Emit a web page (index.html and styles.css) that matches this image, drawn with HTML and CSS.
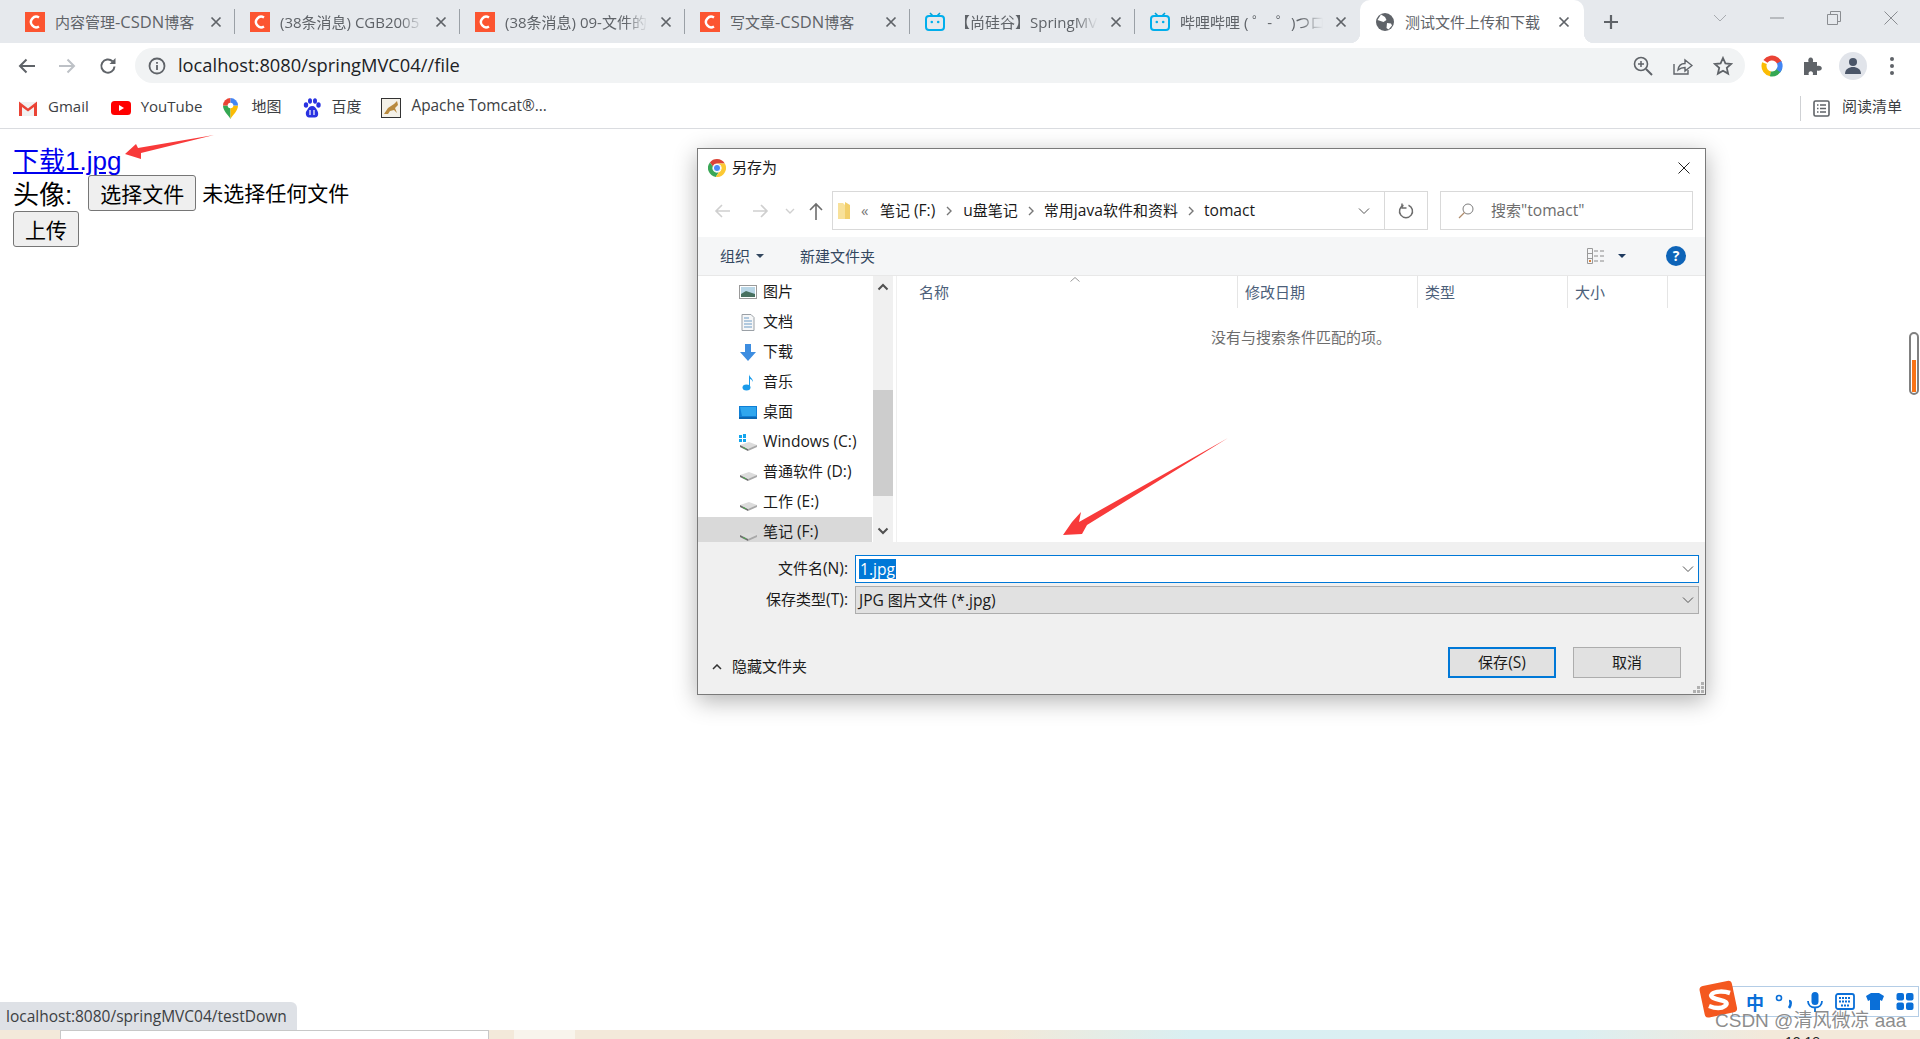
FILE: index.html
```html
<!DOCTYPE html>
<html lang="zh-CN">
<head>
  <meta charset="UTF-8" />
  <title>测试文件上传和下载</title>
  <link rel="stylesheet" href="styles.css">
</head>
<body>

<svg class="defs" width="0" height="0">
  <symbol id="x" viewBox="0 0 12 12"><path d="M1.5 1.5l9 9M10.5 1.5l-9 9" fill="none" stroke="#5f6368" stroke-width="1.7"/></symbol>
  <symbol id="csdn" viewBox="0 0 20 20"><rect width="20" height="20" fill="#fc5531"/><path d="M14 5.6A5.2 5.2 0 1 0 14 14.4" fill="none" stroke="#fff" stroke-width="2.4"/></symbol>
  <symbol id="bili" viewBox="0 0 20 20"><path d="M5 1l3 3M15 1l-3 3" stroke="#00a1d6" stroke-width="1.6" fill="none"/><rect x="1" y="4" width="18" height="14" rx="3" fill="#e6e9ed" stroke="#00aeec" stroke-width="2"/><circle cx="6.8" cy="10" r="1.3" fill="#00aeec"/><circle cx="13.2" cy="10" r="1.3" fill="#00aeec"/></symbol>
  <symbol id="drive" viewBox="0 0 19 12"><path d="M1 6l9-3 8 3-8 4z" fill="#dcdcdc"/><path d="M1 6l8 4v2L1 8z" fill="#6f6f6f"/><path d="M9 10l9-4v2l-9 4z" fill="#a8a8a8"/><path d="M4 8.4l3 1.4" stroke="#4caf50" stroke-width="1"/></symbol>
  <symbol id="chev" viewBox="0 0 12 8"><path d="M1 1.5l5 5 5-5" fill="none" stroke="#555" stroke-width="1"/></symbol>
  <symbol id="crumb" viewBox="0 0 6 10"><path d="M1 1l4 4-4 4" fill="none" stroke="#777" stroke-width="1.4"/></symbol>
</svg>

<div class="tabstrip">
  <div class="tab">
    <svg class="fav" width="20" height="20"><use href="#csdn"/></svg>
    <span class="tab-title">内容管理<span class="lat">-CSDN</span>博客</span>
    <svg class="tab-x" width="12" height="12"><use href="#x"/></svg>
  </div>
  <div class="tab">
    <svg class="fav" width="20" height="20"><use href="#csdn"/></svg>
    <span class="tab-title fade">(38条消息) CGB2005</span>
    <svg class="tab-x" width="12" height="12"><use href="#x"/></svg>
  </div>
  <div class="tab">
    <svg class="fav" width="20" height="20"><use href="#csdn"/></svg>
    <span class="tab-title fade">(38条消息) 09-文件的</span>
    <svg class="tab-x" width="12" height="12"><use href="#x"/></svg>
  </div>
  <div class="tab">
    <svg class="fav" width="20" height="20"><use href="#csdn"/></svg>
    <span class="tab-title">写文章<span class="lat">-CSDN</span>博客</span>
    <svg class="tab-x" width="12" height="12"><use href="#x"/></svg>
  </div>
  <div class="tab">
    <svg class="fav" width="20" height="20"><use href="#bili"/></svg>
    <span class="tab-title fade">【尚硅谷】SpringMV</span>
    <svg class="tab-x" width="12" height="12"><use href="#x"/></svg>
  </div>
  <div class="tab last">
    <svg class="fav" width="20" height="20"><use href="#bili"/></svg>
    <span class="tab-title fade">哔哩哔哩 ( ゜- ゜)つロ</span>
    <svg class="tab-x" width="12" height="12"><use href="#x"/></svg>
  </div>
  <div class="tab active">
    <svg class="fav" width="20" height="20" viewBox="0 0 20 20">
      <circle cx="10" cy="10" r="9" fill="#5f6368"/>
      <path d="M6 2.5l4 2.5 1.500 3-3 2-3-1-3-1zM12 11l4 .5 1 2-3.500 4-2-1.500z" fill="#fff"/>
    </svg>
    <span class="tab-title">测试文件上传和下载</span>
    <svg class="tab-x" width="12" height="12"><use href="#x"/></svg>
  </div>
  <svg class="newtab" width="16" height="16" viewBox="0 0 16 16"><path d="M8 1v14M1 8h14" stroke="#5f6368" stroke-width="2.200"/></svg>
  <div class="win-btns">
    <svg width="14" height="8" viewBox="0 0 14 8"><path d="M1 1l6 6 6-6" fill="none" stroke="#a8abb0" stroke-width="1"/></svg>
    <svg class="win-min" width="14" height="2" viewBox="0 0 14 2"><path d="M0 1h14" stroke="#8a8d91" stroke-width="1"/></svg>
    <svg class="win-max" width="14" height="14" viewBox="0 0 14 14"><path d="M.5 3.500h10v10H.5zM3.500 3.500V.5h10v10h-3" fill="none" stroke="#8a8d91" stroke-width="1"/></svg>
    <svg class="win-close" width="14" height="14" viewBox="0 0 14 14"><path d="M.5.5l13 13M13.500.5l-13 13" stroke="#8a8d91" stroke-width="1"/></svg>
  </div>
</div>

<div class="toolbar">
  <svg class="nav-back" width="18" height="16" viewBox="0 0 18 16"><path d="M17 8H2M8.500 1.500L2 8l6.500 6.500" fill="none" stroke="#5f6368" stroke-width="2"/></svg>
  <svg class="nav-fwd" width="18" height="16" viewBox="0 0 18 16"><path d="M1 8h15M9.500 1.500L16 8l-6.500 6.500" fill="none" stroke="#bdc1c6" stroke-width="2"/></svg>
  <svg class="nav-reload" width="18" height="18" viewBox="0 0 18 18"><path d="M15.500 9.500a6.600 6.600 0 1 1-2-5.200" fill="none" stroke="#5f6368" stroke-width="2"/><path d="M16.500 1v6h-6z" fill="#5f6368"/></svg>
  <div class="omnibox">
    <svg width="18" height="18" viewBox="0 0 18 18"><circle cx="9" cy="9" r="7.500" fill="none" stroke="#5f6368" stroke-width="1.800"/><path d="M9 8v5M9 5v1.800" stroke="#5f6368" stroke-width="1.800"/></svg>
    <span class="url">localhost:8080/springMVC04//file</span>
    <div class="omni-icons">
      <svg width="20" height="20" viewBox="0 0 20 20"><circle cx="8" cy="8" r="6.500" fill="none" stroke="#5f6368" stroke-width="1.600"/><path d="M13 13l6 6" stroke="#5f6368" stroke-width="2"/><path d="M8 5v6M5 8h6" stroke="#5f6368" stroke-width="1.500"/></svg>
      <svg width="20" height="20" viewBox="0 0 20 20"><path d="M1 8v10h14v-4" fill="none" stroke="#5f6368" stroke-width="1.400"/><path d="M5 14c.5-4 3-6.500 7-6.500V4l7 5.500-7 5.500v-3.500c-3 0-5 .8-7 2.500z" fill="none" stroke="#5f6368" stroke-width="1.400"/></svg>
      <svg width="20" height="20" viewBox="0 0 20 20"><path d="M10 2l2.400 5.400 5.800.6-4.400 3.900 1.300 5.700L10 14.700l-5.100 2.900 1.300-5.700L1.800 8l5.800-.6z" fill="none" stroke="#5f6368" stroke-width="1.800"/></svg>
    </div>
  </div>
  <div class="ext-icons">
    <svg width="22" height="22" viewBox="0 0 22 22">
      <g fill="none" stroke-width="5">
        <circle cx="11" cy="11" r="8" stroke="#ea4335" pathLength="100" stroke-dasharray="34 100" transform="rotate(-145 11 11)"/>
        <circle cx="11" cy="11" r="8" stroke="#fbbc04" pathLength="100" stroke-dasharray="28 100" transform="rotate(100 11 11)"/>
        <circle cx="11" cy="11" r="8" stroke="#34a853" pathLength="100" stroke-dasharray="24 100" transform="rotate(15 11 11)"/>
        <circle cx="11" cy="11" r="8" stroke="#4285f4" pathLength="100" stroke-dasharray="18 100" transform="rotate(-28 11 11)"/>
      </g>
    </svg>
    <svg width="20" height="20" viewBox="0 0 20 20"><path d="M1 6h4.500c-.8-3 .5-4.500 2.200-4.500S10.700 3 9.900 6H14v4c3-.8 4.800.5 4.800 2.200S17 15.200 14 14.400V19H9.800c.8-2.600-.5-3.800-2-3.800s-2.800 1.200-2 3.800H1z" fill="#5f6368"/></svg>
    <div class="avatar"><svg width="18" height="18" viewBox="0 0 18 18"><circle cx="9" cy="5" r="4" fill="#4a5568"/><path d="M1 17c0-5 4-7 8-7s8 2 8 7z" fill="#4a5568"/></svg></div>
    <svg width="4" height="18" viewBox="0 0 4 18"><circle cx="2" cy="2" r="2" fill="#5f6368"/><circle cx="2" cy="9" r="2" fill="#5f6368"/><circle cx="2" cy="16" r="2" fill="#5f6368"/></svg>
  </div>
</div>

<div class="bookmarks">
  <div class="bm bm-gmail">
    <svg width="20" height="16" viewBox="0 0 20 16"><path d="M1 2h18v14H1z" fill="#f1f1f1"/><path d="M1 16V1.500L10 8.500l9-7V16h-3V7l-6 4.500L4 7v9z" fill="#ea4335"/></svg>
    <span>Gmail</span>
  </div>
  <div class="bm bm-yt">
    <svg width="20" height="14" viewBox="0 0 20 14"><rect width="20" height="14" rx="3.500" fill="#f00"/><path d="M8 4l5 3-5 3z" fill="#fff"/></svg>
    <span>YouTube</span>
  </div>
  <div class="bm bm-map">
    <svg width="15" height="21" viewBox="0 0 15 21">
      <path d="M7.500 21C5 16.500 0 13 0 7.500h7.500z" fill="#34a853"/><path d="M7.500 21C10 16.500 15 13 15 7.500H7.500z" fill="#fbbc04"/>
      <path d="M0 7.500A7.500 7.500 0 0 1 7.500 0v7.500z" fill="#ea4335"/><path d="M7.500 0A7.500 7.500 0 0 1 15 7.500H7.500z" fill="#4285f4"/>
      <circle cx="7.500" cy="7.500" r="2.800" fill="#fff"/>
    </svg>
    <span>地图</span>
  </div>
  <div class="bm bm-baidu">
    <svg width="18" height="20" viewBox="0 0 18 20" fill="#2932e1"><ellipse cx="3" cy="7" rx="2.200" ry="2.800"/><ellipse cx="7" cy="3" rx="2" ry="2.800"/><ellipse cx="12" cy="3" rx="2" ry="2.800"/><ellipse cx="15.500" cy="7" rx="2.200" ry="2.800"/><path d="M9 8c-3 0-4 3-5.500 5S3 19.500 6 19.500h6c3 0 4-3.500 2.500-6.500S12 8 9 8z"/><path d="M7 12v5M11 12v5" stroke="#fff" stroke-width="1.200"/></svg>
    <span>百度</span>
  </div>
  <div class="bm bm-tomcat">
    <svg width="20" height="20" viewBox="0 0 20 20"><rect x=".5" y=".5" width="19" height="19" fill="#f4f1e8" stroke="#333"/><path d="M3 16l4-6 6-4 3-3 1 4-3 3 2 5-3-3-4 1-2 3z" fill="#b98a3e"/></svg>
    <span>Apache Tomcat®...</span>
  </div>
  <div class="reading">
    <svg width="17" height="17" viewBox="0 0 17 17"><rect x="1" y="1" width="15" height="15" rx="1.500" fill="none" stroke="#5f6368" stroke-width="1.600"/><path d="M4 5h1.500M7 5h6M4 8.500h1.500M7 8.500h6M4 12h1.500M7 12h6" stroke="#5f6368" stroke-width="1.300"/></svg>
    <span>阅读清单</span>
  </div>
</div>

<div class="page">
  <div class="line"><a class="down-link" href="#">下载1.jpg</a></div>
  <form>
    <div class="line"><span class="lbl">头像:</span><button type="button" class="pg-btn pick">选择文件</button><span class="no-file">未选择任何文件</span></div>
    <div class="line"><button type="button" class="pg-btn">上传</button></div>
  </form>

  <svg class="arrow arrow-link" width="100" height="30" viewBox="0 0 100 30"><path d="M1 19L12 9 14 13 90 0 17 18 17 24z" fill="#f83a3a"/></svg>

  <div class="dialog">
    <div class="dlg-title">
      <svg width="18" height="18" viewBox="0 0 18 18">
        <path d="M9 0a9 9 0 0 1 7.800 4.500H9A4.500 4.500 0 0 0 4.800 7.400L1.900 3.400A9 9 0 0 1 9 0z" fill="#db4437"/>
        <path d="M1.900 3.400A9 9 0 0 0 7.800 17.900l2.900-4.600A4.500 4.500 0 0 1 4.800 7.400z" fill="#3aa757"/>
        <path d="M16.800 4.500A9 9 0 0 1 7.800 17.900l3-4.600A4.500 4.500 0 0 0 12 5.700L9 4.500z" fill="#fcc934"/>
        <circle cx="9" cy="9" r="3.600" fill="#4c8bf5" stroke="#fff" stroke-width="1"/>
      </svg>
      <span>另存为</span>
      <svg class="dlg-close" width="12" height="12" viewBox="0 0 12 12"><path d="M.5.5l11 11M11.500.5l-11 11" stroke="#222" stroke-width="1"/></svg>
    </div>

    <div class="dlg-nav">
      <svg class="dlg-arrows" width="134" height="39" viewBox="0 0 134 39">
        <path d="M32 20H18M24 14l-6 6 6 6" fill="none" stroke="#cfcfcf" stroke-width="1.600"/>
        <path d="M55 20h14M63 14l6 6-6 6" fill="none" stroke="#cfcfcf" stroke-width="1.600"/>
        <path d="M88 18l4 4 4-4" fill="none" stroke="#d0d0d0" stroke-width="1.400"/>
        <path d="M118 29V13M112 19l6-6 6 6" fill="none" stroke="#6d6d6d" stroke-width="1.600"/>
      </svg>
      <div class="dlg-addr">
        <svg class="folder" width="13" height="17" viewBox="0 0 13 17"><path d="M0 1h5l2 2h5v14H0z" fill="#f8e19a"/><path d="M7 0l5 3v14H7z" fill="#f2cf6b"/></svg>
        <span class="dbl">«</span>
        <span>笔记 <span class="lat">(F:)</span></span>
        <svg class="crumb-sep" width="6" height="10"><use href="#crumb"/></svg>
        <span><span class="lat">u</span>盘笔记</span>
        <svg class="crumb-sep tight" width="6" height="10"><use href="#crumb"/></svg>
        <span>常用<span class="lat">java</span>软件和资料</span>
        <svg class="crumb-sep tight" width="6" height="10"><use href="#crumb"/></svg>
        <span class="lat">tomact</span>
        <svg class="addr-chev" width="12" height="8"><use href="#chev"/></svg>
        <div class="addr-refresh">
          <svg width="16" height="16" viewBox="0 0 16 16"><path d="M10.500 2.200a6.500 6.500 0 1 1-5 0" fill="none" stroke="#6d6d6d" stroke-width="1.500"/><path d="M4 .5v4.500h4.500" fill="none" stroke="#6d6d6d" stroke-width="1.500"/></svg>
        </div>
      </div>
      <div class="dlg-search">
        <svg width="16" height="16" viewBox="0 0 16 16"><circle cx="10" cy="6" r="5" fill="none" stroke="#7d7d7d" stroke-width="1"/><path d="M6.500 9.500L1 15" stroke="#b08c6c" stroke-width="1.200"/></svg>
        <span>搜索<span class="lat">"tomact"</span></span>
      </div>
    </div>

    <div class="dlg-tools">
      <span>组织</span>
      <svg class="caret" width="8" height="4" viewBox="0 0 8 4"><path d="M0 0h8L4 4z" fill="#33475f"/></svg>
      <span class="new-folder">新建文件夹</span>
      <svg class="view-ico" width="18" height="16" viewBox="0 0 18 16"><path d="M.5.500h5v15h-5zM.5 5.500h5M.5 10.500h5" fill="none" stroke="#9a9a9a"/><path d="M7 3h4M13 3h4M7 8h4M13 8h4M7 13h4M13 13h4" stroke="#8a8a8a"/><rect x="2" y="12" width="2" height="2" fill="#d9803c"/></svg>
      <svg class="caret view-caret" width="8" height="4" viewBox="0 0 8 4"><path d="M0 0h8L4 4z" fill="#1e3a5f"/></svg>
      <span class="help">?</span>
    </div>

    <div class="dlg-panes">
      <div class="tree">
        <div class="tree-row">
          <svg width="18" height="14" viewBox="0 0 18 14"><rect x=".5" y=".5" width="17" height="13" fill="#fff" stroke="#9a9a9a"/><rect x="2" y="2" width="14" height="10" fill="#b9d6e6"/><path d="M2 9l5-3 9 3v3H2z" fill="#47705f"/></svg>
          <span>图片</span>
        </div>
        <div class="tree-row">
          <svg width="18" height="17" viewBox="0 0 18 17"><path d="M3 .5h9l3 3v13H3z" fill="#f6f7f8" stroke="#9aa0a6"/><path d="M5 4h5M5 7h8M5 10h8M5 13h8" stroke="#6d9bc4"/></svg>
          <span>文档</span>
        </div>
        <div class="tree-row">
          <svg width="18" height="17" viewBox="0 0 18 17"><path d="M6 0h6v8h5l-8 9-8-9h5z" fill="#3d8de0"/></svg>
          <span>下载</span>
        </div>
        <div class="tree-row">
          <svg width="18" height="17" viewBox="0 0 18 17"><ellipse cx="7.500" cy="13.500" rx="4" ry="3" fill="#1a9bea"/><path d="M10 13V0c0 3 4 4 4 8-1-2-2-3-3-3v8z" fill="#1a9bea"/></svg>
          <span>音乐</span>
        </div>
        <div class="tree-row">
          <svg width="18" height="13" viewBox="0 0 18 13"><rect width="18" height="13" fill="#0f7fd6"/><path d="M1 1h16v9H3z" fill="#2fa6ee"/><path d="M0 12h18" stroke="#0a4f8c"/></svg>
          <span>桌面</span>
        </div>
        <div class="tree-row">
          <svg width="19" height="17" viewBox="0 0 19 17"><use href="#drive" y="5" width="19" height="12"/><path d="M0 1h3v3H0zM4 0h3v4H4zM0 5h3v3H0zM4 5h3v3H4z" fill="#12a5ee"/></svg>
          <span class="lat">Windows (C:)</span>
        </div>
        <div class="tree-row">
          <svg class="drv" width="19" height="12"><use href="#drive"/></svg>
          <span>普通软件 <span class="lat">(D:)</span></span>
        </div>
        <div class="tree-row">
          <svg class="drv" width="19" height="12"><use href="#drive"/></svg>
          <span>工作 <span class="lat">(E:)</span></span>
        </div>
        <div class="tree-row selected">
          <svg class="drv" width="19" height="12"><use href="#drive"/></svg>
          <span>笔记 <span class="lat">(F:)</span></span>
        </div>
      </div>

      <div class="tree-scroll">
        <svg width="12" height="8" viewBox="0 0 12 8"><path d="M1.500 6.500L6 2l4.500 4.500" fill="none" stroke="#505050" stroke-width="2"/></svg>
        <div class="tree-track"><div class="tree-thumb"></div></div>
        <svg width="12" height="8" viewBox="0 0 12 8"><path d="M1.500 1.500L6 6l4.500-4.500" fill="none" stroke="#505050" stroke-width="2"/></svg>
      </div>

      <div class="files">
        <div class="file-head">
          <div class="col col-name">名称<svg class="sort" width="10" height="5" viewBox="0 0 10 5"><path d="M.5 4.500L5 .5l4.500 4" fill="none" stroke="#9a9a9a"/></svg></div>
          <div class="col col-date">修改日期</div>
          <div class="col col-type">类型</div>
          <div class="col col-size">大小</div>
        </div>
        <div class="no-match">没有与搜索条件匹配的项。</div>
      </div>
    </div>

    <div class="dlg-bottom">
      <div class="field">
        <label>文件名<span class="lat">(N):</span></label>
        <div class="combo combo-name">
          <span class="sel-text lat">1.jpg</span>
          <svg width="12" height="8"><use href="#chev"/></svg>
        </div>
      </div>
      <div class="field field-type">
        <label>保存类型<span class="lat">(T):</span></label>
        <div class="combo combo-type">
          <span><span class="lat">JPG</span> 图片文件 <span class="lat">(*.jpg)</span></span>
          <svg width="12" height="8"><use href="#chev"/></svg>
        </div>
      </div>
      <div class="dlg-foot">
        <svg width="10" height="6" viewBox="0 0 10 6"><path d="M1 5l4-4 4 4" fill="none" stroke="#333" stroke-width="1.500"/></svg>
        <span class="hide-folders">隐藏文件夹</span>
        <button type="button" class="dlg-btn primary">保存<span class="lat">(S)</span></button>
        <button type="button" class="dlg-btn">取消</button>
      </div>
    </div>

    <svg class="grip" width="11" height="11" viewBox="0 0 11 11" fill="#b0b0b0"><rect x="8" y="0" width="3" height="3"/><rect x="4" y="4" width="3" height="3"/><rect x="8" y="4" width="3" height="3"/><rect x="0" y="8" width="3" height="3"/><rect x="4" y="8" width="3" height="3"/><rect x="8" y="8" width="3" height="3"/></svg>
    <svg class="arrow arrow-dlg" width="166" height="100" viewBox="0 0 166 100"><path d="M165 0L24 87 19 96 0 97 9 84 18 74 16 84z" fill="#f83a3a"/></svg>
  </div>

  <div class="scroll-pill"><div class="scroll-fill"></div></div>

  <div class="status">localhost:8080/springMVC04/testDown</div>

  <div class="ime">
    <svg class="ime-logo" width="42" height="40" viewBox="0 0 42 40">
      <rect x="3" y="3" width="33" height="32" rx="4" fill="#f4581f" transform="rotate(-12 20 20)"/>
      <path d="M31 13c-6-2-15-2-18 1s3 5 8 6 9 3 5 6-11 2-16 0" fill="none" stroke="#fff" stroke-width="4.500"/>
    </svg>
    <span class="ime-zh">中</span>
    <svg width="20" height="18" viewBox="0 0 20 18"><circle cx="4" cy="5" r="2.500" fill="none" stroke="#0a6fd8" stroke-width="1.600"/><path d="M14 8c2 0 2.500 3 0 7" fill="none" stroke="#0a6fd8" stroke-width="2.600"/></svg>
    <svg width="16" height="20" viewBox="0 0 16 20"><rect x="4.500" y="0" width="7" height="13" rx="3.500" fill="#0a6fd8"/><path d="M1 9c0 4 3 6.500 7 6.500S15 13 15 9M8 16v4" fill="none" stroke="#0a6fd8" stroke-width="1.800"/></svg>
    <svg width="20" height="17" viewBox="0 0 20 17"><rect x="1" y="1" width="18" height="15" rx="2" fill="none" stroke="#0a6fd8" stroke-width="1.800"/><path d="M4 5h12M4 8.500h12M6 12.500h8" stroke="#0a6fd8" stroke-width="2" stroke-dasharray="2 1"/></svg>
    <svg width="18" height="17" viewBox="0 0 18 17"><path d="M5 0h8l5 3-2 5-2-1v10H4V7L2 8 0 3z" fill="#0a6fd8"/></svg>
    <svg width="17" height="17" viewBox="0 0 17 17" fill="#0a6fd8"><rect width="7.500" height="7.500" rx="2"/><rect x="9.500" width="7.500" height="7.500" rx="2"/><rect y="9.500" width="7.500" height="7.500" rx="2"/><rect x="9.500" y="9.500" width="7.500" height="7.500" rx="2"/></svg>
  </div>
  <div class="watermark">CSDN @清风微凉 aaa</div>
</div>

<div class="taskstrip">
  <div class="task-window"></div>
  <div class="task-patch"></div>
  <div class="task-clock">13:18</div>
</div>

</body>
</html>
```

FILE: styles.css
```css
* {
  box-sizing: border-box;
}

html, body {
  margin: 0;
  height: 1039px;
  overflow: hidden;
}

body {
  display: flex;
  flex-direction: column;
  background: #fff;
  font-family: "Open Sans", "Noto Sans CJK SC", sans-serif;
}

.defs {
  position: absolute;
}

/* tab strip */
.tabstrip {
  height: 43px;
  flex: none;
  display: flex;
  padding-left: 10px;
  background: #e6e9ed;
}

.tab {
  width: 225px;
  height: 43px;
  display: flex;
  align-items: center;
  padding: 0 13px 0 15px;
  position: relative;
  font-size: 15px;
  color: #5f6368;
}

.tab .lat {
  font-size: 16.500px;
}

.tab::after {
  content: "";
  position: absolute;
  right: 0;
  top: 9px;
  height: 25px;
  width: 1px;
  background: #9aa0a6;
}

.tab.last::after {
  display: none;
}

.tab.active {
  width: 224px;
  padding-right: 14px;
  background: #fff;
  border-radius: 10px 10px 0 0;
}

.tab.active::before {
  content: "";
  position: absolute;
  left: -10px;
  bottom: 0;
  width: 10px;
  height: 10px;
  background: radial-gradient(circle at 0 0, transparent 10px, #fff 10.500px);
}

.tab.active::after {
  right: -10px;
  top: auto;
  bottom: 0;
  width: 10px;
  height: 10px;
  background: radial-gradient(circle at 100% 0, transparent 10px, #fff 10.500px);
}

.fav {
  flex: none;
  margin-right: 10px;
}

.tab-title {
  flex: 1;
  min-width: 0;
  margin-right: 12px;
  white-space: nowrap;
  overflow: hidden;
}

.fade {
  -webkit-mask-image: linear-gradient(to right, #000 84%, transparent 100%);
  mask-image: linear-gradient(to right, #000 84%, transparent 100%);
}

.tab-x {
  flex: none;
}

.newtab {
  margin: 14px 0 0 19px;
}

.win-btns {
  display: flex;
  align-items: center;
  height: 36px;
  margin-left: 94px;
}

.win-min {
  margin-left: 43px;
}

.win-max {
  margin-left: 43px;
}

.win-close {
  margin-left: 43px;
}

/* toolbar */
.toolbar {
  height: 45px;
  flex: none;
  display: flex;
  align-items: center;
  padding-left: 18px;
  background: #fff;
}

.nav-fwd {
  margin-left: 22px;
}

.nav-reload {
  margin-left: 23px;
}

.omnibox {
  width: 1610px;
  height: 35px;
  margin-left: 18px;
  padding: 0 12px 0 13px;
  display: flex;
  align-items: center;
  border-radius: 18px;
  background: #f1f3f4;
}

.url {
  margin-left: 12px;
  padding-bottom: 2px;
  font-size: 18.300px;
  color: #202124;
}

.omni-icons {
  margin-left: auto;
  display: flex;
  gap: 20px;
}

.ext-icons {
  display: flex;
  align-items: center;
  margin-left: 16px;
}

.ext-icons svg:nth-child(2) {
  margin-left: 20px;
}

.avatar {
  width: 28px;
  height: 28px;
  margin-left: 16px;
  display: flex;
  align-items: center;
  justify-content: center;
  border-radius: 50%;
  background: #e1e4ea;
}

.ext-icons > svg:last-child {
  margin-left: 23px;
}

/* bookmarks */
.bookmarks {
  height: 41px;
  flex: none;
  display: flex;
  align-items: center;
  padding-left: 18px;
  border-bottom: 1px solid #dadce0;
  font-size: 15px;
  color: #3c4043;
}

.bm {
  display: flex;
  align-items: center;
  gap: 10px;
}

.bm span,
.reading span {
  white-space: nowrap;
  padding-bottom: 5px;
}

.bm-yt {
  margin-left: 22px;
}

.bm-map {
  margin-left: 21px;
  gap: 13px;
}

.bm-baidu {
  margin-left: 22px;
}

.bm-tomcat {
  margin-left: 20px;
  font-size: 15.400px;
}

.reading {
  margin-left: auto;
  margin-right: 18px;
  height: 25px;
  display: flex;
  align-items: center;
  gap: 12px;
  padding-left: 12px;
  border-left: 1px solid #cfd1d4;
}

/* page content */
.page {
  flex: 1;
  position: relative;
  padding: 12px 13px 0;
  font-family: "Liberation Sans", "Noto Sans CJK SC", sans-serif;
  font-size: 21px;
  color: #000;
}

.line {
  height: 34px;
  display: flex;
  align-items: center;
  white-space: nowrap;
}

form .line {
  height: 36px;
}

.down-link {
  margin-top: 5px;
  font-size: 26px;
  color: #00e;
  line-height: 34px;
}

.lbl {
  padding-bottom: 2px;
  font-size: 26px;
}

.pg-btn {
  height: 36px;
  padding: 0 11px;
  margin: 0;
  border: 1px solid #767676;
  border-radius: 3px;
  background: #efefef;
  font-family: "Noto Sans CJK SC", sans-serif;
  font-size: 21px;
  line-height: 1;
  color: #000;
}

.pick {
  margin-left: 16px;
}

.no-file {
  margin-left: 6px;
  padding-bottom: 2px;
  font-size: 21px;
}

.arrow {
  position: absolute;
}

.arrow-link {
  left: 124px;
  top: 6px;
}

/* save dialog */
.dialog {
  position: absolute;
  left: 697px;
  top: 19px;
  width: 1009px;
  height: 547px;
  display: flex;
  flex-direction: column;
  border: 1px solid #7a7a7a;
  background: #fff;
  box-shadow: 0 6px 22px rgba(0, 0, 0, 0.3);
  font-family: "Open Sans", "Noto Sans CJK SC", sans-serif;
  font-size: 15px;
  line-height: 20px;
  color: #1a1a1a;
}

.dialog .lat {
  font-size: 15.600px;
}

.dlg-title {
  height: 37px;
  flex: none;
  display: flex;
  align-items: center;
  gap: 6px;
  padding: 0 15px 0 10px;
}

.dlg-title span,
.dlg-addr > span,
.dlg-search span {
  padding-bottom: 2px;
}

.dlg-close {
  margin-left: auto;
}

.dlg-nav {
  height: 51px;
  flex: none;
  display: flex;
  padding-top: 5px;
}

.dlg-arrows {
  flex: none;
}

.dlg-addr {
  width: 596px;
  height: 39px;
  flex: none;
  display: flex;
  align-items: center;
  padding-left: 5px;
  border: 1px solid #d9d9d9;
  white-space: nowrap;
}

.folder {
  margin-right: 10px;
}

.dbl {
  width: 19px;
  color: #777;
}

.crumb-sep {
  margin: 0 11px;
}

.crumb-sep.tight {
  margin: 0 10px;
}

.addr-chev {
  margin-left: auto;
  margin-right: 14px;
}

.addr-refresh {
  width: 43px;
  height: 100%;
  display: flex;
  align-items: center;
  justify-content: center;
  border-left: 1px solid #d9d9d9;
}

.dlg-search {
  width: 253px;
  height: 39px;
  flex: none;
  margin-left: 12px;
  display: flex;
  align-items: center;
  gap: 17px;
  padding-left: 17px;
  border: 1px solid #d9d9d9;
  color: #6d6d6d;
}

.dlg-tools {
  height: 39px;
  flex: none;
  display: flex;
  align-items: center;
  padding: 0 19px 0 22px;
  background: #f5f6f7;
  border-bottom: 1px solid #e8e8e8;
  color: #33475f;
}

.caret {
  margin-left: 6px;
}

.new-folder {
  margin-left: 36px;
}

.view-ico {
  margin-left: auto;
}

.view-caret {
  margin-left: 13px;
}

.help {
  width: 20px;
  height: 20px;
  margin-left: 40px;
  border-radius: 50%;
  background: #0e64b8;
  color: #fff;
  font-weight: 700;
  font-size: 14px;
  line-height: 20px;
  text-align: center;
}

.dlg-panes {
  height: 266px;
  flex: none;
  display: flex;
  overflow: hidden;
}

.tree {
  width: 174px;
  flex: none;
  padding-top: 1px;
}

.tree-row {
  height: 30px;
  display: flex;
  align-items: center;
  padding-left: 41px;
  white-space: nowrap;
}

.tree-row svg {
  flex: none;
}

.tree-row > span {
  position: absolute;
  margin: -2px 0 0 24px;
}

.drv {
  margin-top: 6px;
}

.tree-row.selected {
  background: #d9d9d9;
}

.tree-scroll {
  width: 20px;
  flex: none;
  margin-left: 1px;
  display: flex;
  flex-direction: column;
  align-items: center;
  padding: 7px 0;
  background: #f0f0f0;
}

.tree-track {
  flex: 1;
  width: 100%;
  padding-top: 99px;
}

.tree-thumb {
  height: 106px;
  background: #cdcdcd;
}

.files {
  flex: 1;
  margin-left: 3px;
  border-left: 1px solid #f0f0f0;
}

.file-head {
  height: 32px;
  display: flex;
  color: #4c607a;
}

.col {
  height: 32px;
  padding: 6px 0 0 7px;
  border-right: 1px solid #e5e5e5;
  position: relative;
}

.col-name {
  width: 341px;
  padding-left: 22px;
}

.col-date {
  width: 180px;
}

.col-type {
  width: 150px;
}

.col-size {
  width: 100px;
}

.sort {
  position: absolute;
  left: 173px;
  top: 1px;
}

.no-match {
  margin-top: 19px;
  text-align: center;
  color: #6d6d6d;
}

.dlg-bottom {
  flex: 1;
  padding: 13px 6px 0 0;
  background: #f0f0f0;
}

.field {
  display: flex;
  height: 28px;
  gap: 7px;
}

.field-type {
  margin-top: 3px;
}

.field label {
  width: 150px;
  flex: none;
  text-align: right;
  line-height: 27px;
}

.combo {
  flex: 1;
  display: flex;
  align-items: center;
  justify-content: space-between;
  padding: 0 4px 0 3px;
  border: 1px solid #adadad;
  background: #e1e1e1;
}

.combo-name {
  border-color: #0078d7;
  background: #fff;
}

.sel-text {
  padding: 0 1px;
  background: #0078d7;
  color: #fff;
}

.dlg-foot {
  display: flex;
  align-items: flex-start;
  margin-top: 33px;
  padding: 0 18px 0 14px;
}

.dlg-foot svg {
  margin-top: 17px;
}

.hide-folders {
  margin: 9px auto 0 10px;
}

.dlg-btn {
  width: 108px;
  height: 31px;
  margin: 0 0 0 17px;
  padding: 0 0 2px;
  border: 1px solid #adadad;
  background: #e1e1e1;
  font: inherit;
  color: #1a1a1a;
}

.dlg-btn.primary {
  border: 2px solid #0078d7;
}

.grip {
  position: absolute;
  right: 1px;
  bottom: 1px;
}

.arrow-dlg {
  left: 365px;
  top: 289px;
}

/* things lying over the page */
.scroll-pill {
  position: absolute;
  left: 1909px;
  top: 203px;
  width: 10px;
  height: 63px;
  padding: 26px 1px 1px;
  border: 2px solid #808080;
  border-radius: 5px;
  background: #fff;
}

.scroll-fill {
  height: 100%;
  background: #f97316;
}

.status {
  position: absolute;
  left: 0;
  bottom: 0;
  width: 297px;
  height: 28px;
  padding-left: 6px;
  border-top-right-radius: 6px;
  background: #dee1e6;
  font-family: "Open Sans", sans-serif;
  font-size: 15.500px;
  line-height: 28px;
  color: #3c4043;
  white-space: nowrap;
}

.ime {
  position: absolute;
  left: 1732px;
  top: 857px;
  width: 187px;
  height: 31px;
  display: flex;
  align-items: center;
  gap: 10px;
  padding-left: 12px;
  border: 1px solid #b4cde6;
  background: #fff;
  color: #0a6fd8;
}

.ime > svg:not(.ime-logo),
.ime-zh {
  width: 20px;
  flex: none;
  text-align: center;
}

.ime-logo {
  position: absolute;
  left: -34px;
  top: -7px;
}

.ime-zh {
  font-family: "Noto Sans CJK SC", sans-serif;
  font-size: 18px;
  font-weight: 700;
  line-height: 1;
}

.watermark {
  position: absolute;
  left: 1715px;
  top: 880px;
  font-family: "Liberation Sans", "Noto Sans CJK SC", sans-serif;
  font-size: 19px;
  line-height: 24px;
  color: rgba(120, 120, 120, 0.85);
  white-space: nowrap;
}

/* desktop showing under the window */
.taskstrip {
  height: 9px;
  flex: none;
  display: flex;
  padding-left: 60px;
  overflow: hidden;
  background: linear-gradient(to right, #f3e9da 0, #f3e9da 44%, #f3e9d8 52%, #d9eff2 62%, #dbeff2 82%, #f3e9da 92%, #f3e9da 100%);
}

.task-window {
  width: 429px;
  flex: none;
  background: #fff;
  border: 1px solid #c8c8c8;
  border-bottom: 0;
}

.task-patch {
  width: 61px;
  margin-left: 25px;
  flex: none;
  background: #f8f4ec;
}

.task-clock {
  margin-left: auto;
  margin-right: 100px;
  font-family: "Liberation Sans", sans-serif;
  font-size: 14px;
  line-height: 24px;
  color: #222;
}
```
